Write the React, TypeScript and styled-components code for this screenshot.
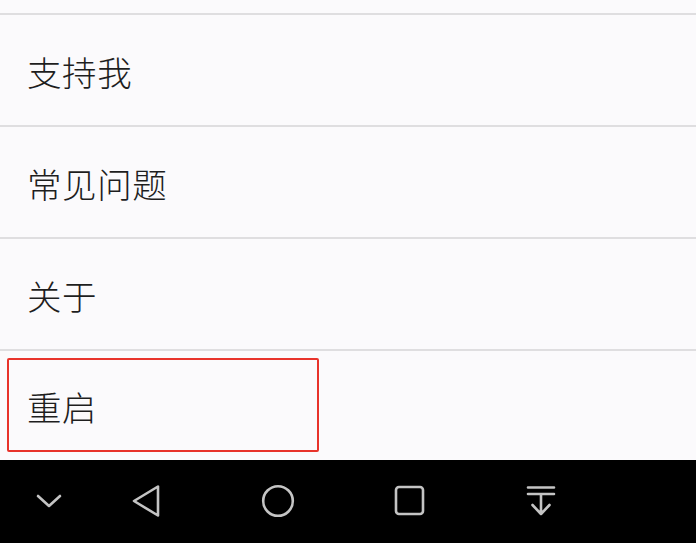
import * as React from 'react';
import styled, { createGlobalStyle } from 'styled-components';

const GlobalStyle = createGlobalStyle`
  html, body {
    margin: 0;
    padding: 0;
    background: #fbfafc;
  }
  body {
    font-family: "Noto Sans CJK SC", "Noto Sans", sans-serif;
  }
`;

const Screen = styled.div`
  width: 696px;
  height: 543px;
  display: flex;
  flex-direction: column;
  background: #fbfafc;
  overflow: hidden;
`;

const TopStrip = styled.div`
  height: 13px;
  border-bottom: 2px solid #dfdee0;
`;

const Row = styled.div<{ $last?: boolean }>`
  position: relative;
  height: ${p => (p.$last ? '109px' : '110px')};
  border-bottom: ${p => (p.$last ? 'none' : '2px solid #dfdee0')};
  display: flex;
  align-items: center;
  padding-left: 27px;
  box-sizing: content-box;
`;

const Label = styled.span`
  font-size: 34.5px;
  font-weight: 300;
  color: #1e1e1e;
  letter-spacing: 0.6px;
  line-height: 1;
  margin-top: 2px;
`;

const Highlight = styled.div`
  position: absolute;
  left: 7px;
  top: 7px;
  width: 308px;
  height: 90px;
  border: 2px solid #e8332b;
  border-radius: 2px;
`;

const NavBar = styled.div`
  flex: 1;
  background: #000;
  display: flex;
  align-items: center;
  position: relative;
`;

const NavIcon = styled.div<{ $x: number }>`
  position: absolute;
  left: ${p => p.$x}px;
  top: 24px;
  width: 34px;
  height: 34px;
  display: flex;
  align-items: center;
  justify-content: center;
`;

const stroke = '#c4c4c4';

const Chevron = () => (
  <svg width="28" height="20" viewBox="0 0 28 20">
    <path d="M3 5 L14 15 L25 5" fill="none" stroke={stroke} strokeWidth="2.6" strokeLinecap="round" strokeLinejoin="round" />
  </svg>
);

const Back = () => (
  <svg width="34" height="34" viewBox="0 0 34 34">
    <path d="M29 2.5 L29 31.5 L5 17 Z" fill="none" stroke={stroke} strokeWidth="2.6" strokeLinejoin="round" />
  </svg>
);

const Home = () => (
  <svg width="34" height="34" viewBox="0 0 34 34">
    <circle cx="17" cy="17" r="14.8" fill="none" stroke={stroke} strokeWidth="2.6" />
  </svg>
);

const Recent = () => (
  <svg width="34" height="34" viewBox="0 0 34 34">
    <rect x="3" y="3" width="27" height="27" rx="3" fill="none" stroke={stroke} strokeWidth="2.6" />
  </svg>
);

const Pull = () => (
  <svg width="34" height="34" viewBox="0 0 34 34">
    <path d="M4 3.5 H30 M4 10 H30 M17 10 V30 M8.5 21 L17 30 L25.5 21" fill="none" stroke={stroke} strokeWidth="2.6" strokeLinecap="round" strokeLinejoin="round" />
  </svg>
);

const items = ['支持我', '常见问题', '关于'];

export default function App() {
  return (
    <Screen>
      <GlobalStyle />
      <TopStrip />
      {items.map(t => (
        <Row key={t}>
          <Label>{t}</Label>
        </Row>
      ))}
      <Row $last>
        <Label>重启</Label>
        <Highlight />
      </Row>
      <NavBar>
        <NavIcon $x={32}><Chevron /></NavIcon>
        <NavIcon $x={129}><Back /></NavIcon>
        <NavIcon $x={261}><Home /></NavIcon>
        <NavIcon $x={393}><Recent /></NavIcon>
        <NavIcon $x={524}><Pull /></NavIcon>
      </NavBar>
    </Screen>
  );
}
